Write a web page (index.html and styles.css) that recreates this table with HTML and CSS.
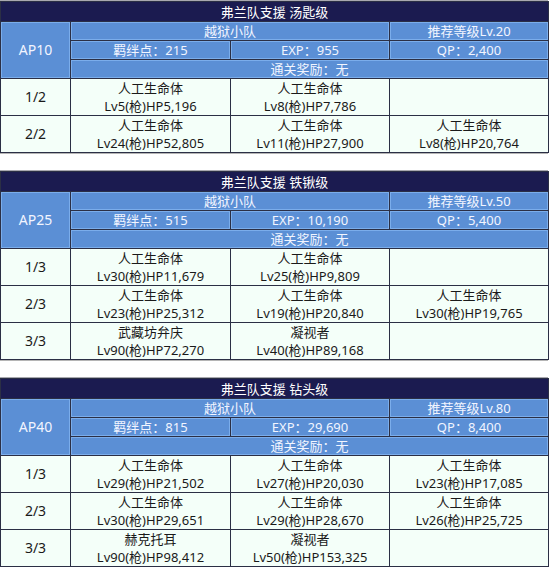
FILE: index.html
```html
<!DOCTYPE html>
<html lang="zh-CN">
<head>
<meta charset="utf-8">
<link rel="stylesheet" href="styles.css">
</head>
<body>
<div class="wrap">
<table class="quest">
<colgroup><col class="c1"><col class="c2"><col class="c3"><col class="c4"></colgroup>
<tr><th class="title" colspan="4">弗兰队支援 汤匙级</th></tr>
<tr><td class="blue ap" rowspan="3">AP10</td><td class="blue" colspan="2">越狱小队</td><td class="blue">推荐等级Lv.20</td></tr>
<tr><td class="blue">羁绊点<span class="colon">：</span>215</td><td class="blue">EXP<span class="colon">：</span>955</td><td class="blue">QP<span class="colon">：</span>2,400</td></tr>
<tr><td class="blue" colspan="3">通关奖励<span class="colon">：</span>无</td></tr>
<tr><td class="wave">1/2</td><td class="enemy">人工生命体<br>Lv5(枪)HP5,196</td><td class="enemy">人工生命体<br>Lv8(枪)HP7,786</td><td class="enemy"></td></tr>
<tr><td class="wave">2/2</td><td class="enemy">人工生命体<br>Lv24(枪)HP52,805</td><td class="enemy">人工生命体<br>Lv11(枪)HP27,900</td><td class="enemy">人工生命体<br>Lv8(枪)HP20,764</td></tr>
</table>
</div>

<div class="wrap">
<table class="quest">
<colgroup><col class="c1"><col class="c2"><col class="c3"><col class="c4"></colgroup>
<tr><th class="title" colspan="4">弗兰队支援 铁锹级</th></tr>
<tr><td class="blue ap" rowspan="3">AP25</td><td class="blue" colspan="2">越狱小队</td><td class="blue">推荐等级Lv.50</td></tr>
<tr><td class="blue">羁绊点<span class="colon">：</span>515</td><td class="blue">EXP<span class="colon">：</span>10,190</td><td class="blue">QP<span class="colon">：</span>5,400</td></tr>
<tr><td class="blue" colspan="3">通关奖励<span class="colon">：</span>无</td></tr>
<tr><td class="wave">1/3</td><td class="enemy">人工生命体<br>Lv30(枪)HP11,679</td><td class="enemy">人工生命体<br>Lv25(枪)HP9,809</td><td class="enemy"></td></tr>
<tr><td class="wave">2/3</td><td class="enemy">人工生命体<br>Lv23(枪)HP25,312</td><td class="enemy">人工生命体<br>Lv19(枪)HP20,840</td><td class="enemy">人工生命体<br>Lv30(枪)HP19,765</td></tr>
<tr><td class="wave">3/3</td><td class="enemy">武藏坊弁庆<br>Lv90(枪)HP72,270</td><td class="enemy">凝视者<br>Lv40(枪)HP89,168</td><td class="enemy"></td></tr>
</table>
</div>

<div class="wrap">
<table class="quest">
<colgroup><col class="c1"><col class="c2"><col class="c3"><col class="c4"></colgroup>
<tr><th class="title" colspan="4">弗兰队支援 钻头级</th></tr>
<tr><td class="blue ap" rowspan="3">AP40</td><td class="blue" colspan="2">越狱小队</td><td class="blue">推荐等级Lv.80</td></tr>
<tr><td class="blue">羁绊点<span class="colon">：</span>815</td><td class="blue">EXP<span class="colon">：</span>29,690</td><td class="blue">QP<span class="colon">：</span>8,400</td></tr>
<tr><td class="blue" colspan="3">通关奖励<span class="colon">：</span>无</td></tr>
<tr><td class="wave">1/3</td><td class="enemy">人工生命体<br>Lv29(枪)HP21,502</td><td class="enemy">人工生命体<br>Lv27(枪)HP20,030</td><td class="enemy">人工生命体<br>Lv23(枪)HP17,085</td></tr>
<tr><td class="wave">2/3</td><td class="enemy">人工生命体<br>Lv30(枪)HP29,651</td><td class="enemy">人工生命体<br>Lv29(枪)HP28,670</td><td class="enemy">人工生命体<br>Lv26(枪)HP25,725</td></tr>
<tr><td class="wave">3/3</td><td class="enemy">赫克托耳<br>Lv90(枪)HP98,412</td><td class="enemy">凝视者<br>Lv50(枪)HP153,325</td><td class="enemy"></td></tr>
</table>
</div>
</body>
</html>
```

FILE: styles.css
```css
html, body {
  margin: 0;
  padding: 0;
  background: #ffffff;
}

body {
  font-family: "Noto Sans", "Noto Sans CJK SC", sans-serif;
  font-size: 13px;
  line-height: 18px;
}

.wrap {
  width: 548px;
  border-top: 1px solid #a9a9b0;
  border-bottom: 1px solid #b5b5b5;
  margin-bottom: 16px;
}

.quest {
  width: 548px;
  border-collapse: collapse;
  table-layout: fixed;
}

.c1 { width: 70px; }
.c2 { width: 160px; }
.c3 { width: 159px; }
.c4 { width: 159px; }

.quest th,
.quest td {
  border: 1px solid #2b2f45;
  padding: 0;
  text-align: center;
  font-weight: normal;
  white-space: nowrap;
}

.title {
  background: #1b1b50;
  color: #ffffff;
  height: 19px;
  border-color: #14143a;
}

.blue {
  background: #5b8fd5;
  color: #f2f5ff;
  height: 18px;
  box-shadow: inset 0 0 0 1px #7badeb;
  border-color: #1d2a4e;
}

.ap {
  font-size: 14px;
}

.colon {
  font-family: "Noto Sans CJK TC", "Noto Sans CJK SC", sans-serif;
}

.wave,
.enemy {
  background: #f4fff9;
  color: #1a1a1a;
  height: 36px;
  border-color: #3a3a3a;
}

.wave {
  font-size: 14px;
}
```
